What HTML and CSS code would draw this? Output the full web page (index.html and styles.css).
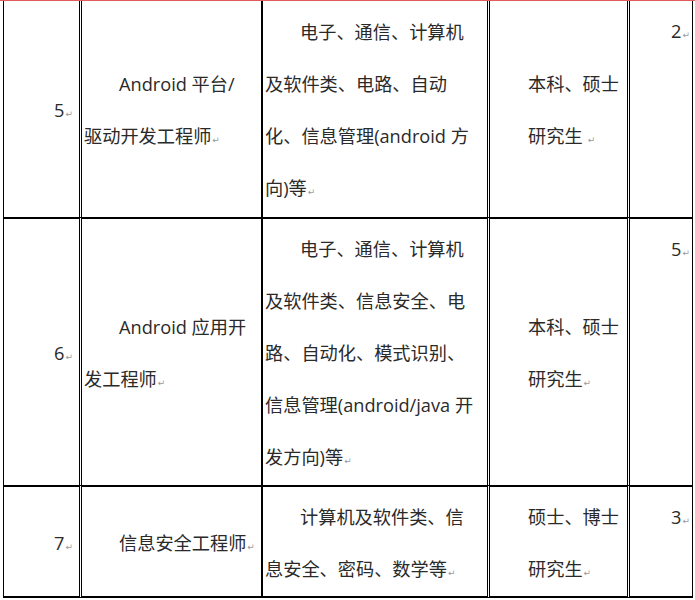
FILE: index.html
```html
<!DOCTYPE html>
<html lang="zh-CN">
<head>
<meta charset="utf-8">
<title>招聘岗位</title>
<link rel="stylesheet" href="styles.css">
</head>
<body>
<div class="topline"></div>
<div class="table">
  <div class="row">
    <div class="cell c1"><div class="p"><span class="lat">5</span><span class="pm">↵</span></div></div>
    <div class="cell c2"><div class="p ind"><span class="lat">Android </span>平台<span class="lat">/</span><br>驱动开发工程师<span class="pm">↵</span></div></div>
    <div class="cell c3"><div class="p ind">电子、通信、计算机<br>及软件类、电路、自动<br>化、信息管理<span class="lat">(android </span>方<br>向<span class="lat">)</span>等<span class="pm">↵</span></div></div>
    <div class="cell c4"><div class="p">本科、硕士<br>研究生 <span class="pm">↵</span></div></div>
    <div class="cell c5"><div class="p"><span class="lat">2</span><span class="pm">↵</span></div></div>
  </div>
  <div class="row">
    <div class="cell c1"><div class="p"><span class="lat">6</span><span class="pm">↵</span></div></div>
    <div class="cell c2"><div class="p ind"><span class="lat">Android </span>应用开<br>发工程师<span class="pm">↵</span></div></div>
    <div class="cell c3"><div class="p ind">电子、通信、计算机<br>及软件类、信息安全、电<br>路、自动化、模式识别、<br>信息管理<span class="lat">(android/java </span>开<br>发方向<span class="lat">)</span>等<span class="pm">↵</span></div></div>
    <div class="cell c4"><div class="p">本科、硕士<br>研究生<span class="pm">↵</span></div></div>
    <div class="cell c5"><div class="p"><span class="lat">5</span><span class="pm">↵</span></div></div>
  </div>
  <div class="row">
    <div class="cell c1"><div class="p"><span class="lat">7</span><span class="pm">↵</span></div></div>
    <div class="cell c2"><div class="p ind">信息安全工程师<span class="pm">↵</span></div></div>
    <div class="cell c3"><div class="p ind">计算机及软件类、信<br>息安全、密码、数学等<span class="pm">↵</span></div></div>
    <div class="cell c4"><div class="p">硕士、博士<br>研究生<span class="pm">↵</span></div></div>
    <div class="cell c5"><div class="p"><span class="lat">3</span><span class="pm">↵</span></div></div>
  </div>
</div>
</body>
</html>
```
FILE: styles.css
```css
* {
  box-sizing: border-box;
}

html,
body {
  margin: 0;
  padding: 0;
  background: #ffffff;
}

body {
  font-family: "Noto Sans CJK SC", "Open Sans", sans-serif;
  font-size: 18.2px;
  color: #2a2a2a;
}

.topline {
  height: 1px;
  background: #e05a5e;
}

.table {
  display: grid;
  grid-template-columns: 76px 182px 226px 140px 66px;
  grid-template-rows: 216px 268px 113px;
  width: 690px;
  margin-left: 3px;
}

.row {
  display: contents;
}

.cell {
  display: flex;
  flex-direction: column;
  justify-content: center;
  align-items: flex-start;
  line-height: 52px;
  white-space: nowrap;
}

.row + .row > .cell {
  border-top: 2px solid #000000;
}

.row:last-child > .cell {
  border-bottom: 2px solid #000000;
}

.p {
  margin: 0;
}

.ind {
  text-indent: 35px;
}

.lat {
  font-family: "Open Sans", sans-serif;
  line-height: 1;
}

.pm {
  font-family: "DejaVu Sans", sans-serif;
  font-size: 9px;
  line-height: 1;
  color: #9a9a9a;
  margin-left: 1px;
}

.c1 {
  border-left: 1px solid #000000;
  align-items: flex-end;
  padding-right: 6px;
}

.c2 {
  border-left: 3px double #000000;
  padding-left: 2px;
}

.c3 {
  border-left: 2px solid #000000;
  padding-left: 2px;
}

.c4 {
  border-left: 3px double #000000;
  padding-left: 38px;
}

.c5 {
  border-left: 3px double #000000;
  border-right: 1px solid #000000;
  justify-content: flex-start;
  align-items: flex-end;
  padding-top: 3px;
  padding-right: 2px;
}
```
